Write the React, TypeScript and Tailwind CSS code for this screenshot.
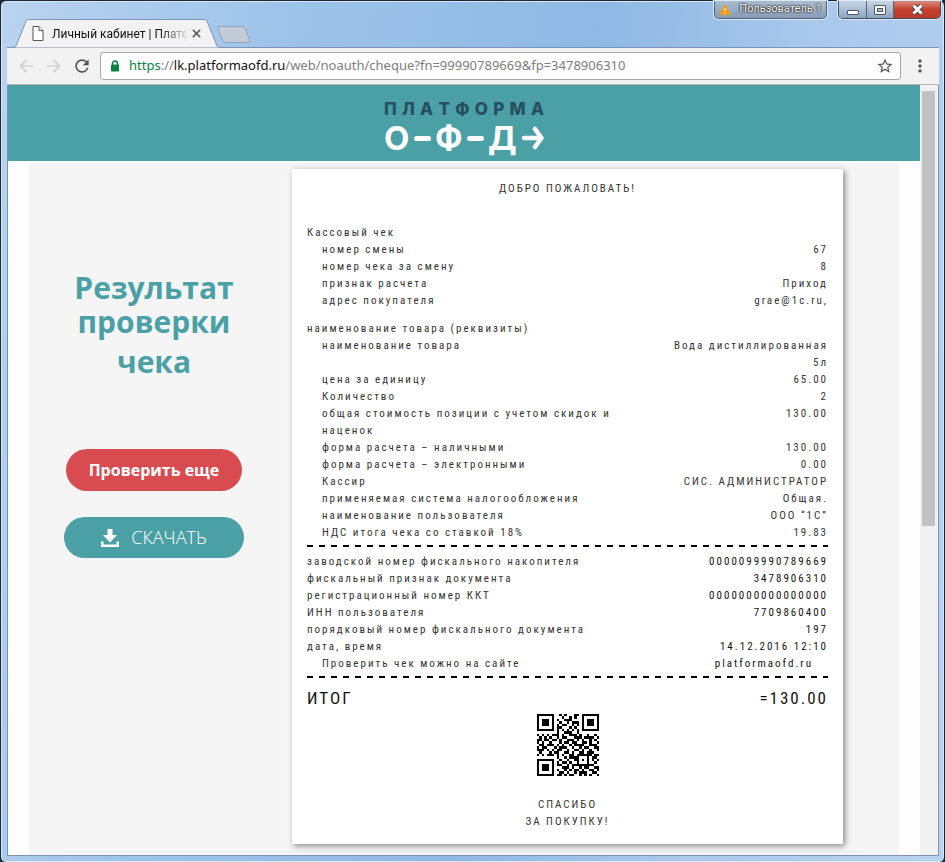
import { X } from "lucide-react";
import { MdArrowBack, MdArrowForward, MdMoreVert, MdRefresh, MdStarBorder } from "react-icons/md";

type Row = { label: string; value: string };

const shift: Row[] = [
    { label: "номер смены", value: "67" },
    { label: "номер чека за смену", value: "8" },
    { label: "признак расчета", value: "Приход" },
    { label: "адрес покупателя", value: "grae@1c.ru," },
];

const goods: Row[] = [
    { label: "наименование товара", value: "Вода дистиллированная 5л" },
    { label: "цена за единицу", value: "65.00" },
    { label: "Количество", value: "2" },
    { label: "общая стоимость позиции с учетом скидок и наценок", value: "130.00" },
    { label: "форма расчета – наличными", value: "130.00" },
    { label: "форма расчета – электронными", value: "0.00" },
    { label: "Кассир", value: "СИС. АДМИНИСТРАТОР" },
    { label: "применяемая система налогообложения", value: "Общая." },
    { label: "наименование пользователя", value: "ООО “1С”" },
    { label: "НДС итога чека со ставкой 18%", value: "19.83" },
];

const fiscal: Row[] = [
    { label: "заводской номер фискального накопителя", value: "0000099990789669" },
    { label: "фискальный признак документа", value: "3478906310" },
    { label: "регистрационный номер ККТ", value: "0000000000000000" },
    { label: "ИНН пользователя", value: "7709860400" },
    { label: "порядковый номер фискального документа", value: "197" },
    { label: "дата, время", value: "14.12.2016 12:10" },
];

const qr = [
    "1111111001010001101111111",
    "1000001000100101001000001",
    "1011101010011100001011101",
    "1011101001001011101011101",
    "1011101010110010101011101",
    "1000001011000101001000001",
    "1111111010101010101111111",
    "0000000010011100100000000",
    "1010101110100111010010010",
    "0101010010110001110111101",
    "1101101101001110101001010",
    "1010010001011011001101001",
    "0110111010100101111001110",
    "1011000101110010010110011",
    "1110101011001001101001001",
    "0100010110011010011011100",
    "1010111010100110111111011",
    "0000000010010111100010110",
    "1111111001001001101010101",
    "1000001010110100100010010",
    "1011101011001011111111100",
    "1011101000111010010110011",
    "1011101010010101101001101",
    "1000001001101001011100110",
    "1111111011010110010101001",
];

function Rows({ items, indent, dark }: { items: Row[]; indent?: boolean; dark?: boolean }) {
    return (
        <dl>
            {items.map((row) => (
                <div key={row.label} className="flex justify-between">
                    <dt className={indent ? "w-[310px] pl-[15px]" : "w-[310px]"}>{row.label}</dt>
                    <dd className={dark ? "w-[160px] text-right text-[#111]" : "w-[160px] text-right"}>{row.value}</dd>
                </div>
            ))}
        </dl>
    );
}

function Dashes() {
    return <div className="h-[2px] bg-[repeating-linear-gradient(90deg,#000_0_6px,transparent_6px_12px)]" />;
}

function TitleBar() {
    return (
        <div className="flex h-[46px] items-start">
            <div className="relative mt-[18px] ml-[7px] flex h-[29px] w-[206px] items-center">
                <svg className="absolute inset-0 h-full w-full" viewBox="0 0 206 29" aria-hidden="true">
                    <path d="M0 28.5L2 27L12 2Q12.500 .5 14 .5H190Q192 .5 193 2L203 27L206 28.5" fill="#f2f2f2" stroke="#7d93b5" />
                </svg>
                <svg className="relative ml-[18px] h-[15px] w-[12px]" viewBox="0 0 12 15" fill="#fff" stroke="#555" aria-hidden="true">
                    <path d="M1 .5H7L11 4.5V14.5H1Z" />
                    <path d="M7 .5V4.5H11" />
                </svg>
                <span className="relative ml-2 w-[134px] bg-linear-to-r from-[#111] from-80% to-[#11111122] bg-clip-text text-[12px] whitespace-nowrap text-transparent font-['Roboto','Open_Sans',sans-serif]">
                    Личный кабинет | Платф
                </span>
                <button type="button" aria-label="Закрыть вкладку" className="relative ml-1 text-[#555]">
                    <X size={13} strokeWidth={3} />
                </button>
            </div>
            <button type="button" aria-label="Новая вкладка" className="mt-[25px] -ml-1">
                <svg className="h-[18px] w-[36px]" viewBox="0 0 36 18" aria-hidden="true">
                    <path d="M3 .5H26Q28 .5 29 2L34 15Q35 16.500 32 16.500H10Q8 16.500 7 15L1.500 2Q1 .5 3 .5Z" fill="#c3ccd6" stroke="#8fa3bf" />
                </svg>
            </button>
            <button type="button" className="ml-auto flex h-[18px] w-[113px] items-center justify-center gap-2 rounded-b-[5px] border border-t-0 border-[#52637a] bg-linear-to-b from-[#a9bccf] to-[#879db6] text-[11px] whitespace-nowrap text-white shadow-[0_0_0_1px_#dce9f7] [text-shadow:0_0_2px_#222,0_0_2px_#222,0_0_1px_#222] font-['Roboto','Open_Sans',sans-serif]">
                <svg className="h-[12px] w-[12px]" viewBox="0 0 12 12" aria-hidden="true">
                    <path d="M6 0L12 11H0Z" fill="#f39c12" />
                    <path d="M6 4V7M6 8.500V10" stroke="#fff" />
                </svg>
                Пользователь 1
            </button>
            <div className="-mr-[2px] ml-[11px] flex h-[18px] overflow-hidden rounded-b-[5px] border border-t-0 border-[#3f4c60] text-white shadow-[0_0_0_1px_#dce9f7]">
                <button type="button" aria-label="Свернуть" className="flex w-[28px] items-center justify-center border-r border-[#52637a] bg-linear-to-b from-[#c6d5e5] to-[#8ea5c0]">
                    <span className="mt-[6px] h-[5px] w-[12px] rounded-[1px] border border-[#4b5566] bg-white" />
                </button>
                <button type="button" aria-label="Развернуть" className="flex w-[27px] items-center justify-center border-r border-[#52637a] bg-linear-to-b from-[#c6d5e5] to-[#8ea5c0]">
                    <span className="flex h-[10px] w-[12px] items-center justify-center rounded-[1px] border border-[#4b5566] bg-white">
                        <span className="h-[4px] w-[6px] border border-[#4b5566] bg-[#a9bccf]" />
                    </span>
                </button>
                <button type="button" aria-label="Закрыть" className="flex w-[46px] items-center justify-center bg-linear-to-b from-[#d9897b] via-[#c4402c] to-[#b93a26]">
                    <svg className="h-[11px] w-[13px]" viewBox="0 0 13 11" aria-hidden="true">
                        <path d="M2.500 1.500L10.500 9.500M10.500 1.500L2.500 9.500" stroke="#4b4452" strokeWidth="5" />
                        <path d="M2.500 1.500L10.500 9.500M10.500 1.500L2.500 9.500" stroke="#fff" strokeWidth="3" />
                    </svg>
                </button>
            </div>
        </div>
    );
}

function Toolbar() {
    return (
        <div className="flex h-[38px] items-center border-t border-b border-t-[#7d93b5] border-b-[#b5b5b5] bg-[#f2f2f2] px-[9px] text-[#555]">
            <button type="button" aria-label="Назад" className="text-[#cfcfcf]"><MdArrowBack size={20} /></button>
            <button type="button" aria-label="Вперед" className="ml-2 text-[#cfcfcf]"><MdArrowForward size={20} /></button>
            <button type="button" aria-label="Обновить" className="ml-2"><MdRefresh size={20} /></button>
            <div className="ml-2 flex h-[28px] flex-1 items-center rounded-[3px] border border-[#a8a8a8] bg-white px-[6px]">
                <svg className="ml-[3px] h-[12px] w-[10px]" viewBox="0 0 10 12" aria-hidden="true">
                    <path d="M2.500 5V3.500A2.500 2.500 0 0 1 7.500 3.500V5" fill="none" stroke="#0b8043" strokeWidth="1.500" />
                    <rect x="1" y="4.500" width="8" height="7" rx="1" fill="#0b8043" />
                </svg>
                <a href="#cheque" className="ml-[9px] font-['Noto_Sans',sans-serif] text-[13px] whitespace-nowrap text-[#7d7d7d]">
                    <span className="text-[#0b8043]">https</span>://<span className="text-[#111]">lk.platformaofd.ru</span>/web/noauth/cheque?fn=99990789669&amp;fp=3478906310
                </a>
                <button type="button" aria-label="Добавить в закладки" className="ml-auto"><MdStarBorder size={18} /></button>
            </div>
            <button type="button" aria-label="Меню" className="ml-[9px]"><MdMoreVert size={20} /></button>
        </div>
    );
}

function Logo() {
    return (
        <a href="#home" className="flex w-[160px] flex-col font-['Inter',sans-serif]">
            <span className="flex justify-between text-[17px] leading-[18px] font-extrabold text-[#264f61]">
                {"ПЛАТФОРМА".split("").map((letter, idx) => (
                    <span key={idx}>{letter}</span>
                ))}
            </span>
            <span className="mt-[3px] flex items-center justify-between text-[33px] leading-[34px] font-bold text-white">
                О
                <span className="h-[5px] w-[17px] rounded-full bg-white" />
                Ф
                <span className="h-[5px] w-[17px] rounded-full bg-white" />
                Д
                <svg className="h-[24px] w-[23px]" viewBox="0 0 23 24" fill="none" stroke="#fff" strokeWidth="4.500" strokeLinecap="round" strokeLinejoin="round" aria-hidden="true">
                    <path d="M3 12H20M14 3L20.500 12L14 21" />
                </svg>
            </span>
        </a>
    );
}

function Receipt() {
    return (
        <section className="mr-14 flex-1 bg-white px-[15px] pt-[11px] pb-[14px] font-['Roboto_Condensed','Liberation_Sans_Narrow',sans-serif] text-[11px] leading-[17px] tracking-[2px] text-[#333] shadow-[2px_2px_6px_rgba(0,0,0,0.45)]">
            <p className="text-center">ДОБРО ПОЖАЛОВАТЬ!</p>
            <h2 className="mt-[27px]">Кассовый чек</h2>
            <Rows items={shift} indent />
            <h2 className="mt-[11px]">наименование товара (реквизиты)</h2>
            <Rows items={goods} indent />
            <div className="mt-[4px] mb-[6px]"><Dashes /></div>
            <Rows items={fiscal} dark />
            <div className="flex justify-between">
                <span className="pl-[15px]">Проверить чек можно на сайте</span>
                <a href="#site" className="pr-[15px] text-[#111]">platformaofd.ru</a>
            </div>
            <div className="mt-[4px] mb-[10px]"><Dashes /></div>
            <div className="flex justify-between text-[17px] leading-[20px] text-[#111]">
                <span>ИТОГ</span>
                <span>=130.00</span>
            </div>
            <svg className="mx-auto mt-[6px] h-[62px] w-[62px]" viewBox="0 0 25 25" shapeRendering="crispEdges" role="img" aria-label="QR-код">
                {qr.map((line, y) =>
                    line.split("").map((cell, x) => cell === "1" && <rect key={`${x}-${y}`} x={x} y={y} width="1" height="1" />)
                )}
            </svg>
            <p className="mt-[20px] text-center">
                СПАСИБО
                <br />
                ЗА ПОКУПКУ!
            </p>
        </section>
    );
}

export default function App() {
    return (
        <div className="bg-[#1c2733]">
            <div className="flex min-h-screen flex-col rounded-[6px] border border-[#1c2733] bg-[linear-gradient(100deg,#b9d3ef_0%,#9fc4ea_25%,#8fb8e4_55%,#a9c8ec_75%,#b7d3f0_100%)] pr-[5px] pb-[6px] pl-[6px] font-['Open_Sans','Noto_Sans',sans-serif] shadow-[inset_0_0_0_1px_#d6e8fa]">
                <TitleBar />
                <Toolbar />
                <div className="flex flex-1 border-x border-b border-[#7d93b5] bg-[#fdfdfd]">
                    <main className="flex flex-1 flex-col">
                        <header className="flex h-[76px] justify-center bg-[#4ba0a6] pt-[15px]">
                            <Logo />
                        </header>
                        <div className="mx-[21px] mt-[2px] flex-1 bg-[#f5f5f5] pt-[6px] pb-[3px]">
                            <div className="flex items-start">
                                <aside className="mr-[13px] flex w-[250px] flex-col items-center pt-[102px]">
                                    <h1 className="w-[180px] text-center text-[30px] leading-[34px] font-bold text-[#4ba0a6]">
                                        Результат проверки
                                        <span className="mt-[6px] block">чека</span>
                                    </h1>
                                    <button type="button" className="mt-[70px] h-[42px] w-[176px] rounded-full bg-[#d74b51] text-[16px] font-bold text-white">
                                        Проверить еще
                                    </button>
                                    <button type="button" className="mt-[26px] flex h-[41px] w-[180px] items-center justify-center gap-3 rounded-full bg-[#4ba0a6] text-[18px] font-light text-white">
                                        <svg className="h-[18px] w-[18px]" viewBox="0 0 18 18" fill="#fff" aria-hidden="true">
                                            <path d="M6.500 0H11.500V6H16L9 13.500L2 6H6.500Z" />
                                            <path d="M0 12.500H2.500V15.500H15.500V12.500H18V18H0Z" />
                                        </svg>
                                        СКАЧАТЬ
                                    </button>
                                </aside>
                                <Receipt />
                            </div>
                            <hr className="mx-[35px] mt-[7px] border-[#ececec]" />
                        </div>
                    </main>
                    <div className="w-[18px] bg-[#f1f1f1] px-[2px] pt-[6px]">
                        <div className="h-[435px] w-[13px] bg-[#c1c1c1]" />
                    </div>
                </div>
            </div>
        </div>
    );
}
